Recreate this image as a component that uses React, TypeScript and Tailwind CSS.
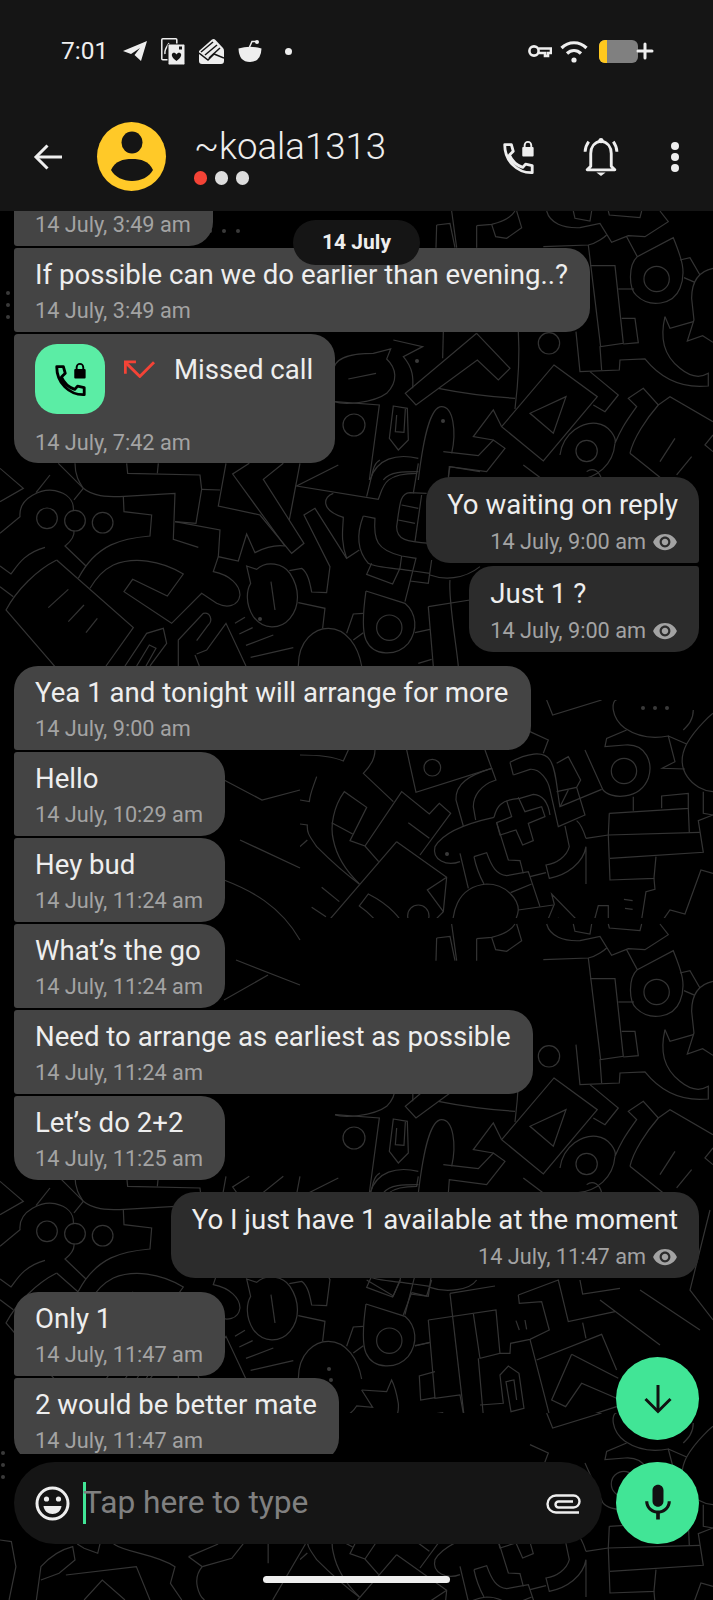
import { Plus } from 'lucide-react'

const ring = (cx: number, cy: number, r: number) =>
  `M${cx - r} ${cy}a${r} ${r} 0 1 0 ${r * 2} 0a${r} ${r} 0 1 0 ${-r * 2} 0`

// wallpaper lines, traced per region (coordinates are 3x page pixels)
const topLines = [
  'M320 60L360 55L375 128', 'M365 18L380 128', 'M320 60L318 128',
  'M440 62L485 58C520 50 545 35 555 18', 'M440 62L440 128', 'M485 58L497 95L530 100L575 68L560 18',
  'M650 18C660 55 700 70 750 68L810 55L845 112L895 92L945 95L1015 50L990 18',
  'M640 125L775 120C800 115 825 95 830 90',
  'M730 18L735 40L780 48L785 18', 'M835 18L838 30L930 38L935 18',
  'M890 95L922 155C895 180 895 250 920 272C960 310 1030 300 1050 250C1070 200 1055 160 1030 98L922 155',
  ring(980, 222, 38),
  'M1050 165L1080 158L1110 210', 'M1062 218L1095 232',
  'M1149 190C1100 200 1085 240 1085 280L1092 345L1072 408L1118 392L1149 412',
  'M1005 335L1020 370L1090 350',
  'M1005 335C990 400 1000 450 1050 490C1080 515 1110 520 1135 505L1135 543C1070 550 1000 530 945 462L870 465L868 495L750 500L738 380',
  'M780 182L855 182L880 415L810 425L815 495', 'M775 120L812 425', 'M865 252L912 252', 'M875 340L915 340L925 413L880 417',
  ring(657, 415, 32),
  'M565 380C570 460 565 530 555 612',
  'M440 385L540 490L505 525L442 465L258 600L226 565L440 385', 'M340 380L338 460',
  'M325 550C400 565 480 575 555 580',
  'M10 500C10 450 80 445 130 445L182 432L170 462C200 490 205 530 170 565C130 595 40 600 15 590', 'M55 522L138 505',
  'M190 405L278 425L220 455C250 490 250 520 248 550',
  'M15 590L148 600L118 825', ring(72, 660, 33),
  'M190 603L232 610L235 705L205 735L178 700Z', 'M200 630L196 680L222 682L226 612',
  'M265 825C280 700 300 605 335 605C370 605 380 680 365 745',
  'M340 740L445 752L490 705L525 730L470 800L358 785L355 825',
  'M672 480L802 575L640 768L515 665Z', 'M708 575L600 625L670 685Z',
  'M515 665L490 615L430 695L490 705',
  'M780 500L865 570L825 620L790 600',
  'M690 750C700 680 760 650 800 655C840 660 860 700 855 715C870 680 880 660 920 605L895 580L940 550L985 600L1020 575L1149 650',
  ring(770, 738, 32),
  'M855 715C850 780 800 820 740 825', 'M900 745L1000 825', 'M900 745C910 700 950 640 985 600',
  'M990 770L1035 700', 'M1040 810L1085 755', 'M1149 690L1125 720L1149 740',
  'M120 825C140 760 200 745 265 760', 'M160 825C180 800 220 800 265 800',
  'M580 780L640 825', 'M770 800C790 785 810 800 815 825',
]

const midLines = [
  'M0 25L70 85L0 125',
  'M175 10L250 85C280 110 320 110 360 110L525 100L520 238L595 262', 'M225 10C225 50 240 70 250 85',
  'M380 10L383 40L600 45L605 88L588 190L525 185', 'M475 10L472 40', 'M605 88L660 90', 'M150 45L108 98',
  'M678 10L655 138L780 165L875 280L912 250L790 58L850 10', 'M748 10L698 42L855 258',
  'M900 10L868 180', 'M1015 15L890 78L1135 118C1150 80 1150 40 1250 40L1255 10',
  'M1100 110C1120 30 1120 10 1140 0', 'M1000 100C970 110 960 150 1030 172',
  'M0 220L60 170C55 110 130 85 165 92C200 100 222 120 220 150',
  ring(141, 175, 31), ring(225, 182, 31), ring(308, 188, 31),
  'M222 212C225 235 205 250 195 258L258 318', 'M135 262C70 280 50 320 33 342L0 318',
  'M222 120L250 85', 'M0 380L40 410',
  'M370 110L372 155L455 165L450 228C370 235 290 250 235 355',
  'M525 185L660 210L655 290L715 303L740 222L765 278C800 260 830 255 855 258',
  'M655 290L640 335C690 345 720 375 720 405C715 440 680 445 650 430L605 400L515 490L372 395L398 358L502 408L550 342C480 300 400 290 340 315C310 330 290 350 270 385',
  'M170 300C110 330 50 390 18 450L165 620', 'M170 300L400 503L318 618',
  'M205 388L145 443', 'M252 435L205 485', 'M292 475L258 518',
  'M375 618L440 520L490 505L500 550L450 618', 'M410 618L448 555L468 565L438 618',
  'M535 618L535 540L610 460C630 455 640 480 625 495L590 542', 'M590 582L620 570L678 490L738 618', 'M585 585L598 618',
  'M705 490L735 472', 'M718 522L758 503', 'M738 556L820 525', 'M752 592L880 563',
  'M740 318L770 328C800 300 850 310 870 340C900 385 900 440 870 475C840 510 790 510 760 470C735 430 740 390 752 370Z',
  'M813 365L825 450',
  'M868 332L905 325C925 340 930 370 935 396L980 398L990 320L912 165L945 145L1040 295L1078 270',
  'M895 428L975 445L968 505',
  'M895 618C895 540 945 505 985 505C1040 505 1075 560 1085 618',
  'M1030 170C1030 200 1020 240 1040 295',
  'M1090 168L1125 175C1120 240 1130 270 1205 288L1248 295L1215 425',
  'M1090 168C1070 220 1070 270 1105 310C1130 325 1200 325 1240 333L1290 340',
  'M1115 310L1100 343L1178 372L1200 325L1205 288',
  'M1230 363L1285 370L1295 300',
  'M1098 393L1215 430C1250 460 1255 510 1225 550C1190 590 1120 590 1098 540C1085 510 1090 450 1098 393',
  ring(1168, 503, 38),
  'M1040 520L1060 462L1090 460', 'M1060 540L1090 518', 'M1245 518L1290 508',
]

const midOnce = [
  'M1285 440L1410 420', 'M1285 440L1300 618', 'M1350 360C1345 420 1370 560 1375 618',
  'M1290 345C1330 360 1390 360 1440 320', 'M1345 50L1350 20L1440 35', 'M1255 610L1295 598',
  'M1280 100L1230 98C1200 100 1200 130 1190 200C1190 240 1220 245 1290 250',
  'M1205 135L1255 145', 'M1265 105L1245 245', 'M1195 180L1245 190', 'M1250 40L1240 100',
]

const lowLines = [
  'M740 0L758 45L905 0', 'M0 165C50 165 100 170 130 183L145 150',
  'M225 150C225 180 210 200 190 220L280 305', 'M50 230C40 260 30 280 28 305L0 300',
  'M320 150L348 277L575 205L555 150', ring(397, 203, 25), 'M690 95L745 120L730 160',
  'M975 85C930 50 935 0 950 0',
  'M980 90L920 115L915 140L975 135C1040 130 1060 190 1045 235C1020 300 930 300 908 268L855 150', ring(972, 213, 38),
  'M975 85C1020 115 1070 115 1105 108L1125 185L1087 205L1155 207', 'M1180 30C1180 60 1165 75 1150 90',
  'M1105 108L1160 132C1120 210 1180 270 1239 275', 'M1160 132C1190 80 1239 40 1239 40',
  'M575 205L588 240C540 255 520 290 520 320L527 360', 'M575 205C510 225 465 250 468 300L490 378',
  'M630 187C680 160 730 150 750 180C770 210 770 270 780 320L905 268', 'M630 187L640 225',
  'M640 225L690 208C720 205 745 240 750 270L775 380L855 345L830 262L842 240L805 170L770 190',
  'M770 275L830 262', 'M780 320L805 270',
  'M582 352C500 370 430 395 405 440C395 480 440 500 480 485',
  'M582 352C590 320 600 300 660 295L700 283C730 285 745 310 750 345',
  'M620 302L635 350L590 368L600 405L648 390L668 435L700 422L685 370L735 350L725 320L675 335L655 292',
  'M590 368L625 480L660 482L670 520',
  'M795 378L808 440C800 470 770 490 738 495L748 535C800 525 850 490 858 440L858 552',
  'M858 415C850 390 840 370 830 362', 'M858 415L925 405L1200 397',
  'M480 460L505 565', 'M522 470L560 458C575 500 590 525 620 527L685 515L720 620',
  'M522 470C530 510 540 530 552 552', 'M690 530L738 518',
  'M460 720C450 640 470 560 560 552C620 552 655 600 655 630C650 680 610 705 528 715L540 900',
  'M655 630L760 615', 'M632 578L695 552', 'M650 670L665 725L620 752L585 745L575 710',
  'M458 708L410 706L408 790L345 788L337 730',
  'M290 425L440 532L430 635L337 730C310 650 260 610 205 582L178 618C240 660 270 720 270 775C270 830 250 870 238 895L170 852L200 780L240 805L270 785',
  'M290 425L92 655L160 740', 'M440 532L382 570L430 635', ring(355, 647, 32),
  'M175 722L215 745L170 852', 'M175 722L88 868L120 900', 'M118 695L60 768L0 732',
  'M65 562L118 605', 'M35 622L78 650',
  'M178 552C120 510 80 470 50 440C30 410 20 400 22 375L0 372',
  'M236 485L195 438L150 422L200 322L133 275C100 320 90 380 100 420C110 470 140 515 178 552',
  'M95 368L158 402', 'M195 438L305 275L388 342L418 310L452 340L360 465', 'M325 368L388 415', 'M0 440L22 420',
  'M475 860L458 708', 'M475 858L335 860L330 900', 'M390 860L390 900',
  'M535 800L665 818L665 850L600 855L598 900',
  'M928 340L1165 325L1165 280L1085 288L1085 325', 'M928 340L925 405L930 540L1062 535L1068 470',
  'M930 475L1210 457L1195 362L1239 345', 'M1165 325L1168 397', 'M1000 290L1000 332', 'M1210 275L1210 340L1239 345',
  'M1062 535L1065 568L1038 575L1020 690L925 682L925 617L895 617L872 702L825 690L828 657L755 582L763 613L740 668L775 655C790 700 810 725 860 718L905 705L915 742L935 768L1018 730L1035 748L1105 702L1082 670L1110 630L1155 642L1203 510L1239 520',
  'M740 668C760 730 790 770 862 772L915 742',
  'M725 780L862 772L875 835L945 835L955 900', 'M740 852L875 832', 'M805 845L815 900', 'M740 852L750 900', 'M875 835L880 900',
  'M972 598L998 602', 'M975 625L998 628', 'M1239 660L1205 658L1239 735',
  'M980 748L1012 812C990 830 985 870 1000 900', 'M1012 812L1118 752L1150 870L1185 900',
  'M1140 820L1168 812L1198 865C1210 845 1239 840 1239 840', 'M1150 870L1185 885', 'M1030 900C1040 840 1100 820 1110 900',
]

const rightLines = [
  'M625 150L828 120L840 250L780 265L760 130', 'M625 150L645 385L720 375L733 445L790 437L775 265',
  'M690 70L733 445', 'M645 305L598 318L602 390L645 383', 'M585 228L628 218', 'M690 70L825 48',
  'M630 52C680 70 750 60 770 30', 'M440 30L520 78L540 30', 'M575 68L620 78L635 30', 'M575 68L550 135',
  'M895 75L1015 30L1045 155L1185 125', 'M1080 30L1088 72L1200 55',
  'M895 75L898 100L965 95L988 180L930 208L872 220L870 250L840 250', 'M888 152L898 180', 'M915 150L920 178',
  'M1088 158L1098 205', 'M950 270L1145 193L1190 300', 'M930 208L998 472L1190 410',
  'M1055 253L1195 325', 'M1055 253L995 390L1037 410L1085 340L1190 385',
  'M780 405L850 400L840 315L865 288L897 310L912 415L873 425L858 335L882 330L890 390',
  'M998 472L868 458L858 490L985 545L880 555L860 560C850 520 830 505 815 505C790 510 790 540 790 573',
  'M765 472L550 535L558 573', 'M765 472L725 573', 'M765 472L805 573', 'M680 552L650 573',
  'M590 440L668 428L678 457L790 437',
  'M590 440C560 500 490 535 425 502L438 462C490 490 540 460 535 400C530 370 520 340 515 330L500 365L425 360',
  'M425 360L458 412L410 408C390 440 360 445 355 445',
]

// bottom strip, measured on a 2.2x / 3x crop
const bottomLines = [
  'M0 600L25 605L35 680L20 780', 'M80 780L90 680C110 650 130 630 160 620L165 660L130 700L90 720',
  'M170 612L185 625L215 640L220 612', 'M145 705L300 680L330 780', 'M185 780L225 720L275 780',
  'M250 612C280 640 340 640 385 680L375 730L400 780', 'M415 650L480 612', 'M415 650L445 680C420 720 440 770 450 780',
  'M445 680L510 655L535 612', 'M590 612L590 670', 'M600 780L672 612',
]

// what the crops did not show, next to the short bubbles
const sideLines = [
  'M224 780L262 800L300 790', 'M240 840L300 868', 'M224 880C250 890 280 905 300 940', 'M236 960L300 985',
  'M224 1000L268 975', 'M710 1210L690 1290L713 1320', 'M640 1290L700 1330', 'M600 1300L660 1345',
]

function Lines({ paths }: { paths: string[] }) {
  return (
    <>
      {paths.map((d, i) => (
        <path key={i} d={d} vectorEffect="non-scaling-stroke" />
      ))}
    </>
  )
}

function Wallpaper() {
  return (
    <svg className="absolute inset-0" width="713" height="1600" fill="none" stroke="#343434" strokeWidth="1.2">
      <defs>
        <clipPath id="low-clip">
          <rect x="0" y="0" width="1239" height="654" />
        </clipPath>
        <clipPath id="right-clip">
          <rect x="0" y="0" width="1200" height="429" />
        </clipPath>
        <g id="tile">
          <g transform="translate(330 205) scale(0.3333)">
            <Lines paths={topLines} />
          </g>
          <g transform="translate(0 460) scale(0.3333)">
            <Lines paths={midLines} />
          </g>
          <g transform="translate(300 700) scale(0.3333)">
            <g clipPath="url(#low-clip)">
              <Lines paths={lowLines} />
            </g>
          </g>
        </g>
      </defs>
      <use href="#tile" />
      <use href="#tile" y="713" />
      <g transform="translate(0 460) scale(0.3333)">
        <Lines paths={midOnce} />
      </g>
      <g transform="translate(220 1270) scale(0.3333)">
        <g clipPath="url(#right-clip)">
          <Lines paths={rightLines} />
        </g>
      </g>
      <g transform="translate(0 1340) scale(0.4545 0.3333)">
        <Lines paths={bottomLines} />
      </g>
      <Lines paths={sideLines} />
      <g fill="#3a3a3a" stroke="none">
        <circle cx="210" cy="231" r="2" />
        <circle cx="224" cy="231" r="2" />
        <circle cx="238" cy="231" r="2" />
        <circle cx="8" cy="293" r="2" />
        <circle cx="8" cy="305" r="2" />
        <circle cx="8" cy="317" r="2" />
        <circle cx="3" cy="1453" r="2" />
        <circle cx="3" cy="1465" r="2" />
        <circle cx="3" cy="1477" r="2" />
        <circle cx="260" cy="619" r="2" />
        <circle cx="417" cy="361" r="2" />
        <circle cx="443" cy="421" r="2" />
        <circle cx="447" cy="854" r="2" />
        <circle cx="643" cy="708" r="2" />
        <circle cx="655" cy="708" r="2" />
        <circle cx="667" cy="708" r="2" />
        <circle cx="329" cy="1369" r="2" />
        <circle cx="331" cy="1380" r="2" />
      </g>
    </svg>
  )
}

function TelegramIcon() {
  return (
    <svg width="24" height="20" viewBox="0 0 24 20" fill="#eeeeee">
      <path d="M0 10L24 0L18 20L11.5 14L17 7L8 13Z" strokeLinejoin="round" />
    </svg>
  )
}

function CardsIcon() {
  return (
    <svg width="24" height="27" viewBox="0 0 24 27">
      <rect x="0.8" y="0.8" width="15" height="21" rx="1" fill="none" stroke="#eeeeee" strokeWidth="1.5" />
      <path d="M4 16C3 12 6 9 8 5" fill="none" stroke="#eeeeee" strokeWidth="1.5" />
      <rect x="7" y="6" width="17" height="21" rx="1.5" fill="#eeeeee" stroke="#151515" strokeWidth="1" />
      <path d="M15.5 23C11 19.5 10.5 17.5 11 16C12 14 14.5 14.5 15.5 16.5C16.5 14.5 19 14 20 16C20.5 17.5 20 19.5 15.5 23Z" fill="#151515" />
      <path d="M18 8.5h3v3h-3z" fill="#151515" />
    </svg>
  )
}

function WalletIcon() {
  return (
    <svg width="25" height="25" viewBox="0 0 25 25">
      <path d="M0 12L13 0.5Q15 -0.5 16.5 1L24 9Q25 10 25 12V22A3 3 0 0 1 22 25H3A3 3 0 0 1 0 22Z" fill="#eeeeee" />
      <g fill="none" stroke="#151515" strokeWidth="1.5">
        <path d="M2 13L14 3" />
        <path d="M6 16L18 6" />
        <path d="M10 19L21 9" />
        <path d="M0 14L9 21L15 15L25 19" />
      </g>
    </svg>
  )
}

function BowlIcon() {
  return (
    <svg width="24" height="22" viewBox="0 0 24 22">
      <path d="M0.5 8.5Q12 5 23.5 8.5Q23 22 12 22Q1 22 0.5 8.5Z" fill="#eeeeee" />
      <path d="M11.5 7L14 1.5H18" fill="none" stroke="#eeeeee" strokeWidth="1.5" />
      <circle cx="19" cy="2" r="2" fill="#eeeeee" />
    </svg>
  )
}

function KeyIcon() {
  return (
    <svg width="24" height="14" viewBox="0 0 24 14" fill="none" stroke="#eeeeee" strokeWidth="2.6">
      <circle cx="6" cy="7" r="4.6" />
      <path d="M10.5 4.5H23V9H20V12H17V9H10.5" />
    </svg>
  )
}

function WifiIcon() {
  return (
    <svg width="28" height="23" viewBox="0 0 28 23" fill="none" stroke="#eeeeee" strokeWidth="3.2">
      <path d="M1.5 8C8.5 1 19.5 1 26.5 8" />
      <path d="M7 13.5C11 9.5 17 9.5 21 13.5" />
      <circle cx="14" cy="20" r="2.6" fill="#eeeeee" stroke="none" />
    </svg>
  )
}

function PhoneLockIcon({ size }: { size: number }) {
  return (
    <svg width={size} height={size} viewBox="0 0 36 38" fill="none" stroke="currentColor">
      <path d="M4 6H11L13 13L9 17C11.5 23 16 27.5 23 30L26 26.5L33 28V35.5C17 36 4 23 4 6Z" strokeWidth="3" strokeLinejoin="round" />
      <rect x="22.5" y="8.5" width="12" height="10" rx="1" fill="currentColor" stroke="none" />
      <path d="M25 9V6.5A3.5 3.5 0 0 1 32 6.5V9" strokeWidth="2" />
    </svg>
  )
}

function BellIcon() {
  return (
    <svg width="40" height="38" viewBox="0 0 39 37" fill="none" stroke="#eeeeee" strokeWidth="2.8">
      <path d="M19.5 3C13 4 9.5 9 9.5 15V27.5L6 31H33L29.5 27.5V15C29.5 9 26 4 19.5 3Z" strokeLinejoin="round" />
      <path d="M4 13.5C4 10 5 7 7.5 3.5" />
      <path d="M35 13.5C35 10 34 7 31.5 3.5" />
      <path d="M15 33.5H24L19.5 37Z" fill="#eeeeee" stroke="none" />
      <circle cx="19.5" cy="2.5" r="2.5" fill="#eeeeee" stroke="none" />
    </svg>
  )
}

function EyeIcon() {
  return (
    <svg width="26" height="26" viewBox="0 0 24 24" fill="#a3a3a3" className="shrink-0">
      <path d="M12 4.5C7 4.5 2.73 7.61 1 12c1.73 4.39 6 7.5 11 7.5s9.27-3.11 11-7.5c-1.73-4.39-6-7.5-11-7.5zM12 17c-2.76 0-5-2.24-5-5s2.24-5 5-5 5 2.24 5 5-2.24 5-5 5zm0-8c-1.66 0-3 1.34-3 3s1.34 3 3 3 3-1.34 3-3-1.34-3-3-3z" />
    </svg>
  )
}

function Received({ text, time, corners = 'rounded-[3px] rounded-r-[24px]', gap = 'mb-[2px]' }: { text?: string; time: string; corners?: string; gap?: string }) {
  return (
    <div className={`self-start bg-[#444444] pl-[21px] pr-[22px] pt-[9px] pb-[7px] ${corners} ${gap}`}>
      <p className="h-[36px] text-[27.6px] leading-[36px] text-[#eeeeee] whitespace-nowrap">{text}</p>
      <p className="mt-[4px] text-[21.7px] leading-[28px] text-[#a3a3a3] whitespace-nowrap">{time}</p>
    </div>
  )
}

function Sent({ text, time, corners = 'rounded-[24px]', gap = 'mb-[3px]' }: { text: string; time: string; corners?: string; gap?: string }) {
  return (
    <div className={`self-end bg-[#2c2c2c] pl-[21px] pr-[21px] pt-[10px] pb-[7px] ${corners} ${gap}`}>
      <p className="text-[27.6px] leading-[36px] text-[#eeeeee] whitespace-nowrap">{text}</p>
      <div className="flex items-center justify-end gap-[6px] h-[28px] mt-[5px]">
        <span className="text-[21.7px] leading-[28px] text-[#a3a3a3] whitespace-nowrap">{time}</span>
        <EyeIcon />
      </div>
    </div>
  )
}

function MissedCall() {
  return (
    <div className="self-start bg-[#444444] rounded-[24px] rounded-tl-[4px] pl-[21px] pr-[22px] pt-[10px] pb-[6px] mb-[14px]">
      <div className="flex items-start">
        <div className="w-[70px] h-[70px] rounded-[22px] bg-[#5beda5] flex items-center justify-center text-black">
          <PhoneLockIcon size={36} />
        </div>
        <svg width="31" height="18" viewBox="368 448 96 54" fill="none" stroke="#f44336" strokeWidth="9" className="ml-[19px] mt-[16px]">
          <path d="M461 454L417 498L374 456" />
          <path d="M405 453H372V490" />
        </svg>
        <span className="ml-[19px] mt-[6px] text-[27.6px] leading-[40px] text-[#eeeeee] whitespace-nowrap">Missed call</span>
      </div>
      <p className="mt-[15px] text-[21.7px] leading-[28px] text-[#a3a3a3] whitespace-nowrap">14 July, 7:42 am</p>
    </div>
  )
}

export default function App() {
  return (
    <div className="relative w-[713px] h-[1600px] overflow-hidden bg-black flex flex-col font-['Roboto',sans-serif]">
      <Wallpaper />

      <header className="relative bg-[#151515] h-[211px] shrink-0">
        {/* status bar */}
        <div className="flex items-center h-[102px] pl-[61px] pr-[61px] text-[#eeeeee]">
          <span className="text-[24.5px] w-[44px] whitespace-nowrap">7:01</span>
          <div className="ml-[18px]"><TelegramIcon /></div>
          <div className="ml-[14px]"><CardsIcon /></div>
          <div className="ml-[14px]"><WalletIcon /></div>
          <div className="ml-[14px]"><BowlIcon /></div>
          <div className="ml-[23px] w-[7px] h-[7px] rounded-full bg-[#eeeeee]" />
          <div className="ml-auto"><KeyIcon /></div>
          <div className="ml-[8px]"><WifiIcon /></div>
          <div className="ml-[11px] w-[39px] h-[23px] rounded-[6px] bg-[#808080] overflow-hidden">
            <div className="w-[8px] h-full bg-[#ffc81e]" />
          </div>
          <Plus size={24} strokeWidth={3} className="-ml-[5px] -mr-[5px] text-[#eeeeee]" />
        </div>

        {/* toolbar */}
        <div className="flex items-center h-[109px] pl-[32px] pr-[34px]">
          <svg width="32" height="28" viewBox="0 0 32 28" fill="none" stroke="#eeeeee" strokeWidth="3">
            <path d="M30 14H6" />
            <path d="M15.5 2.5L4 14L15.5 25.5" />
          </svg>
          <div className="ml-[33px] w-[69px] h-[69px] rounded-full bg-[#ffc928]">
            <svg width="69" height="69" viewBox="0 0 69 69" fill="#151515">
              <ellipse cx="35" cy="20.5" rx="10.5" ry="11" />
              <path d="M14 48C18 39 26 37 35 37C44 37 52 39 56 48C52 55 44 59 35 59C26 59 18 55 14 48Z" />
            </svg>
          </div>
          <div className="ml-[28px]">
            <p className="text-[36.6px] leading-[38px] font-light text-[#eeeeee] whitespace-nowrap">~koala1313</p>
            <div className="flex gap-[8px] mt-[5px]">
              <span className="w-[13px] h-[14px] rounded-full bg-[#f44336]" />
              <span className="w-[13px] h-[14px] rounded-full bg-[#dddddd]" />
              <span className="w-[13px] h-[14px] rounded-full bg-[#dddddd]" />
            </div>
          </div>
          <div className="ml-auto text-[#eeeeee]"><PhoneLockIcon size={36} /></div>
          <div className="ml-[45px]"><BellIcon /></div>
          <div className="ml-[50px] flex flex-col gap-[3px]">
            <span className="w-[8px] h-[8px] rounded-full bg-[#eeeeee]" />
            <span className="w-[8px] h-[8px] rounded-full bg-[#eeeeee]" />
            <span className="w-[8px] h-[8px] rounded-full bg-[#eeeeee]" />
          </div>
        </div>
      </header>

      {/* messages */}
      <main className="relative h-[1243px] shrink-0 overflow-hidden px-[14px]">
        <div className="flex flex-col -mt-[49px]">
          <Received time="14 July, 3:49 am" />
          <Received text="If possible can we do earlier than evening..?" time="14 July, 3:49 am" />
          <MissedCall />
          <Sent text="Yo waiting on reply" time="14 July, 9:00 am" corners="rounded-[24px] rounded-br-[3px]" />
          <Sent text="Just 1 ?" time="14 July, 9:00 am" corners="rounded-[24px] rounded-tr-[3px]" gap="mb-[14px]" />
          <Received text="Yea 1 and tonight will arrange for more" time="14 July, 9:00 am" corners="rounded-[24px] rounded-bl-[3px]" />
          <Received text="Hello" time="14 July, 10:29 am" />
          <Received text="Hey bud" time="14 July, 11:24 am" />
          <Received text="What’s the go" time="14 July, 11:24 am" />
          <Received text="Need to arrange as earliest as possible" time="14 July, 11:24 am" />
          <Received text="Let’s do 2+2" time="14 July, 11:25 am" corners="rounded-[24px] rounded-tl-[3px]" gap="mb-[12px]" />
          <Sent text="Yo I just have 1 available at the moment" time="14 July, 11:47 am" gap="mb-[14px]" />
          <Received text="Only 1" time="14 July, 11:47 am" corners="rounded-[24px] rounded-bl-[3px]" />
          <Received text="2 would be better mate" time="14 July, 11:47 am" corners="rounded-[24px] rounded-tl-[3px]" />
        </div>
      </main>

      {/* composer */}
      <div className="relative flex mt-[8px] px-[14px] gap-[14px] shrink-0">
        <div className="w-[588px] h-[82px] rounded-full bg-[#151515] flex items-center pl-[21px] pr-[20px]">
          <svg width="35" height="35" viewBox="0 0 35 35" fill="none" stroke="#eeeeee" strokeWidth="3">
            <circle cx="17.5" cy="17.5" r="15.5" />
            <circle cx="11.5" cy="13" r="2.6" fill="#eeeeee" stroke="none" />
            <circle cx="23.5" cy="13" r="2.6" fill="#eeeeee" stroke="none" />
            <path d="M8.5 20H26.5C26 25 22 28 17.5 28S9 25 8.5 20Z" fill="#eeeeee" stroke="none" />
          </svg>
          <span className="ml-[13px] w-[3px] h-[42px] bg-[#41e596]" />
          <span className="-ml-[3px] text-[31.7px] leading-[42px] text-[#808080] whitespace-nowrap">Tap here to type</span>
          <svg width="36" height="24" viewBox="0 0 36 24" fill="none" stroke="#eeeeee" strokeWidth="2.4" className="ml-auto">
            <path d="M33 21.5H10A8.5 8.5 0 0 1 10 4.5H27.5A6 6 0 0 1 27.5 16.5H12.5A2.8 2.8 0 0 1 12.5 10.5H27" />
          </svg>
        </div>
        <button className="w-[83px] h-[82px] rounded-full bg-[#41e596] flex items-center justify-center">
          <svg width="44" height="44" viewBox="0 0 24 24" fill="#111111">
            <path d="M12 14c1.66 0 2.99-1.34 2.99-3L15 5c0-1.66-1.34-3-3-3S9 3.34 9 5v6c0 1.66 1.34 3 3 3zm5.3-3c0 3-2.54 5.1-5.3 5.1S6.7 14 6.7 11H5c0 3.41 2.72 6.23 6 6.72V21h2v-3.28c3.28-.48 6-3.3 6-6.72h-1.7z" />
          </svg>
        </button>
      </div>

      {/* gesture bar */}
      <div className="relative mt-[32px] mx-auto w-[187px] h-[7px] rounded-full bg-[#eeeeee]" />

      {/* overlays */}
      <div className="absolute left-[293px] top-[220px] w-[127px] h-[45px] rounded-full bg-[#151515] flex items-center justify-center text-[21px] font-bold text-[#eeeeee]">
        14 July
      </div>
      <button className="absolute left-[616px] top-[1357px] w-[83px] h-[83px] rounded-full bg-[#41e596] flex items-center justify-center">
        <svg width="30" height="30" viewBox="0 0 30 30" fill="none" stroke="#111111" strokeWidth="3">
          <path d="M15 1V27" />
          <path d="M2.5 15L15 27.5L27.5 15" />
        </svg>
      </button>
    </div>
  )
}
